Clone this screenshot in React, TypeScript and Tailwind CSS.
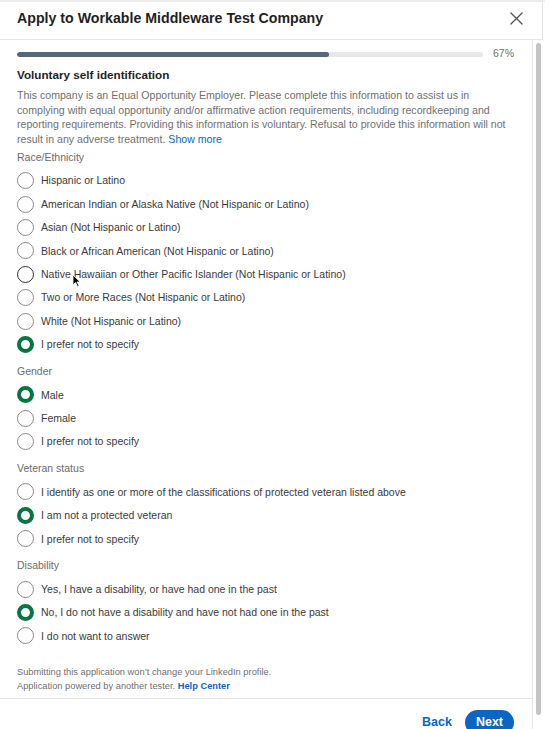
import React from "react";

const font = { fontFamily: '"Liberation Sans", Arial, sans-serif' };

function Radio({ label, checked, hover }: { label: string; checked?: boolean; hover?: boolean }) {
  return (
    <div className="flex h-[23.4px] items-center">
      {checked ? (
        <span className="box-border h-[17px] w-[17px] shrink-0 rounded-full border-[4.5px] border-[#057642] bg-white" />
      ) : (
        <span
          className={
            "box-border h-[17px] w-[17px] shrink-0 rounded-full border-[1.5px] bg-white " +
            (hover ? "border-[#333333]" : "border-[#8a8a8a]")
          }
        />
      )}
      <span className="ml-[7px] text-[10.5px] leading-none text-[#3a3a3a]">{label}</span>
    </div>
  );
}

function Section({ title, options, checked, hoverIdx, first }: { title: string; options: string[]; checked: number; hoverIdx?: number; first?: boolean }) {
  return (
    <div className={first ? "mt-[3px]" : "mt-[7px]"}>
      <div className="mb-[4px] h-[16px] text-[10.5px] leading-[16px] text-[#6b6b6b]">{title}</div>
      {options.map((o, i) => (
        <Radio key={o} label={o} checked={i === checked} hover={i === hoverIdx} />
      ))}
    </div>
  );
}

export default function App() {
  return (
    <div className="relative h-[729px] w-[545px] overflow-hidden bg-white" style={font}>
      <div className="h-[2px] bg-[#ececec]" />
      <div className="flex h-[38px] w-[543px] items-center justify-between border-b border-r border-[#e6e6e6] pb-[4px] pl-[17px] pr-[19px]">
        <div className="text-[14.2px] font-bold text-[#1f1f1f]">Apply to Workable Middleware Test Company</div>
        <svg width="13" height="13" viewBox="0 0 14 14" className="text-[#555]">
          <path d="M1 1 L13 13 M13 1 L1 13" stroke="currentColor" strokeWidth="1.4" strokeLinecap="round" />
        </svg>
      </div>
      <div className="flex">
        <div className="w-[533px] border-r border-[#e6e6e6]">
          <div className="pl-[17px] pr-[18px] pt-[8px]">
            <div className="flex h-[12px] items-center">
              <div className="h-[5px] w-[467px] overflow-hidden rounded-full bg-[#e8e8e8]">
                <div className="h-full rounded-full bg-[#56687a]" style={{ width: "67%" }} />
              </div>
              <div className="ml-[10px] text-[10.5px] text-[#707070]">67%</div>
            </div>
            <div className="mt-[6px] text-[11.7px] font-bold leading-[18px] text-[#1f1f1f]">Voluntary self identification</div>
            <p className="mt-[4px] text-[10.6px] leading-[14.5px] text-[#707070]">
              This company is an Equal Opportunity Employer. Please complete this information to assist us in complying with equal opportunity and/or affirmative action requirements, including recordkeeping and reporting requirements. Providing this information is voluntary. Refusal to provide this information will not result in any adverse treatment. <span className="text-[#0a66c2]">Show more</span>
            </p>
            <Section
              first
              title="Race/Ethnicity"
              checked={7}
              hoverIdx={4}
              options={[
                "Hispanic or Latino",
                "American Indian or Alaska Native (Not Hispanic or Latino)",
                "Asian (Not Hispanic or Latino)",
                "Black or African American (Not Hispanic or Latino)",
                "Native Hawaiian or Other Pacific Islander (Not Hispanic or Latino)",
                "Two or More Races (Not Hispanic or Latino)",
                "White (Not Hispanic or Latino)",
                "I prefer not to specify",
              ]}
            />
            <Section title="Gender" checked={0} options={["Male", "Female", "I prefer not to specify"]} />
            <Section
              title="Veteran status"
              checked={1}
              options={[
                "I identify as one or more of the classifications of protected veteran listed above",
                "I am not a protected veteran",
                "I prefer not to specify",
              ]}
            />
            <Section
              title="Disability"
              checked={1}
              options={[
                "Yes, I have a disability, or have had one in the past",
                "No, I do not have a disability and have not had one in the past",
                "I do not want to answer",
              ]}
            />
            <div className="mt-[17px] text-[9.3px] leading-[14px] text-[#707070]">
              <div>Submitting this application won’t change your LinkedIn profile.</div>
              <div>
                Application powered by another tester. <span className="font-bold text-[#0a66c2]">Help Center</span>
              </div>
            </div>
          </div>
          <div className="mt-[5px] flex h-[40px] items-start justify-end gap-[13px] border-t border-[#e6e6e6] pr-[18px] pt-[11px]">
            <span className="mt-[4px] text-[12.5px] font-bold leading-[16px] text-[#0a66c2]">Back</span>
            <span className="flex h-[25px] items-center rounded-full bg-[#0a66c2] px-[11px] text-[12.5px] font-bold text-white">Next</span>
          </div>
        </div>
        <div className="flex w-[10px] justify-center pt-[3px]">
          <div className="h-[672px] w-[5px] rounded-full bg-[#c4c4c4]" />
        </div>
      </div>
      <svg className="absolute left-[72px] top-[274px]" width="9" height="13" viewBox="0 0 9 13">
        <path d="M1 1 L1 11 L3.5 8.5 L5.5 12.5 L7 11.8 L5 8 L8.2 8 Z" fill="#000" stroke="#fff" strokeWidth="0.8" />
      </svg>
    </div>
  );
}
